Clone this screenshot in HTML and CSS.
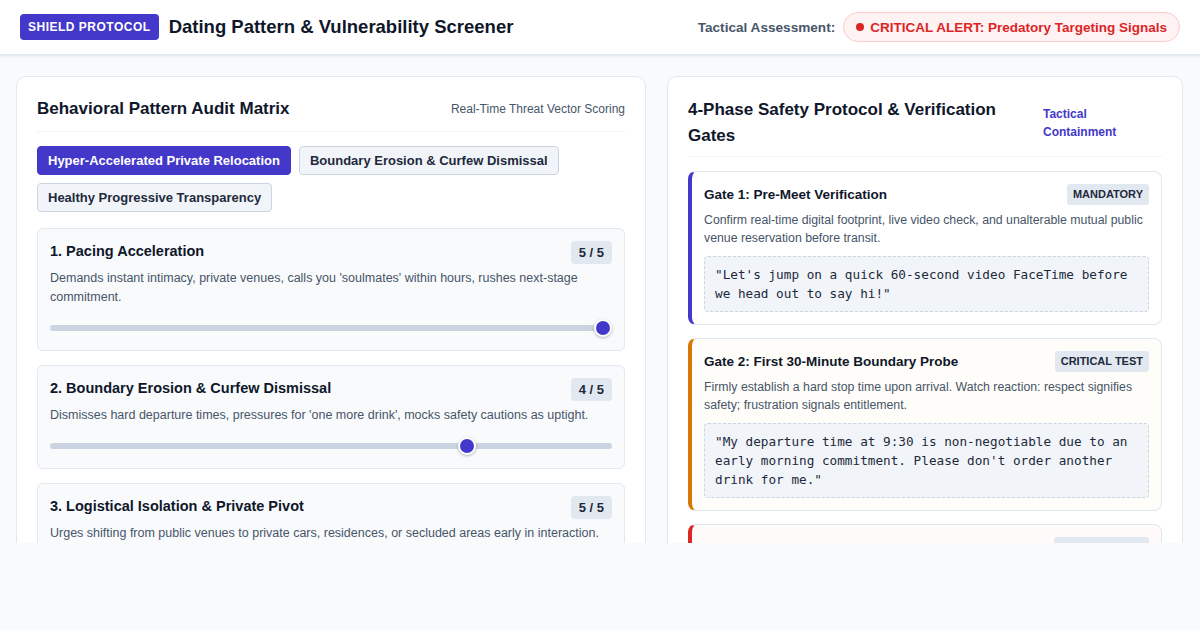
FILE: index.html
```html
<!DOCTYPE html>
<html lang="en">
<head>
<meta charset="utf-8">
<title>Dating Pattern &amp; Vulnerability Screener</title>
<link rel="stylesheet" href="styles.css">
</head>
<body>
<header class="topbar">
  <div class="brand">
    <span class="brand-badge">SHIELD PROTOCOL</span>
    <h1 class="brand-title">Dating Pattern &amp; Vulnerability Screener</h1>
  </div>
  <div class="assessment">
    <span class="assessment-label">Tactical Assessment:</span>
    <span class="alert-pill"><span class="alert-dot"></span>CRITICAL ALERT: Predatory Targeting Signals</span>
  </div>
</header>

<div class="viewport">
  <main class="layout">
    <section class="panel">
      <div class="panel-head">
        <h2 class="panel-title">Behavioral Pattern Audit Matrix</h2>
        <span class="panel-sub">Real-Time Threat Vector Scoring</span>
      </div>
      <div class="tabs">
        <button class="tab tab-active">Hyper-Accelerated Private Relocation</button>
        <button class="tab">Boundary Erosion &amp; Curfew Dismissal</button>
        <button class="tab">Healthy Progressive Transparency</button>
      </div>
      <div class="criteria">
        <div class="criterion">
          <div class="criterion-head">
            <h3 class="criterion-title">1. Pacing Acceleration</h3>
            <span class="score">5 / 5</span>
          </div>
          <p class="criterion-desc">Demands instant intimacy, private venues, calls you 'soulmates' within hours, rushes next-stage commitment.</p>
          <div class="slider"><div class="slider-rail"><div class="slider-fill" style="width:100%"><span class="thumb"></span></div></div></div>
        </div>
        <div class="criterion">
          <div class="criterion-head">
            <h3 class="criterion-title">2. Boundary Erosion &amp; Curfew Dismissal</h3>
            <span class="score">4 / 5</span>
          </div>
          <p class="criterion-desc">Dismisses hard departure times, pressures for 'one more drink', mocks safety cautions as uptight.</p>
          <div class="slider"><div class="slider-rail"><div class="slider-fill" style="width:75%"><span class="thumb"></span></div></div></div>
        </div>
        <div class="criterion">
          <div class="criterion-head">
            <h3 class="criterion-title">3. Logistical Isolation &amp; Private Pivot</h3>
            <span class="score">5 / 5</span>
          </div>
          <p class="criterion-desc">Urges shifting from public venues to private cars, residences, or secluded areas early in interaction.</p>
          <div class="slider"><div class="slider-rail"><div class="slider-fill" style="width:100%"><span class="thumb"></span></div></div></div>
        </div>
      </div>
    </section>

    <section class="panel">
      <div class="panel-head panel-head-tight">
        <h2 class="panel-title panel-title-wrap">4-Phase Safety Protocol &amp; Verification Gates</h2>
        <span class="panel-link">Tactical Containment</span>
      </div>
      <div class="gates">
        <div class="gate gate-indigo">
          <div class="gate-head">
            <h3 class="gate-title">Gate 1: Pre-Meet Verification</h3>
            <span class="gate-tag">MANDATORY</span>
          </div>
          <p class="gate-desc">Confirm real-time digital footprint, live video check, and unalterable mutual public venue reservation before transit.</p>
          <div class="script">"Let's jump on a quick 60-second video FaceTime before we head out to say hi!"</div>
        </div>
        <div class="gate gate-amber">
          <div class="gate-head">
            <h3 class="gate-title">Gate 2: First 30-Minute Boundary Probe</h3>
            <span class="gate-tag">CRITICAL TEST</span>
          </div>
          <p class="gate-desc">Firmly establish a hard stop time upon arrival. Watch reaction: respect signifies safety; frustration signals entitlement.</p>
          <div class="script">"My departure time at 9:30 is non-negotiable due to an early morning commitment. Please don't order another drink for me."</div>
        </div>
        <div class="gate gate-red">
          <div class="gate-head">
            <h3 class="gate-title">Gate 3: Mid-Date Venue Lock (Zero Relocation)</h3>
            <span class="gate-tag">HIGH DEFENSE</span>
          </div>
          <p class="gate-desc">Refuse any proposal to move to a second private location, vehicle, or residence. Keep the meeting in the verified public venue.</p>
          <div class="script">"I'm happy right here. I'll be heading home on my own from this spot tonight."</div>
        </div>
      </div>
    </section>
  </main>
</div>
</body>
</html>
```

FILE: styles.css
```css
* { box-sizing: border-box; }

html, body {
  margin: 0;
  padding: 0;
}

body {
  background: #f8fafc;
  font-family: "Liberation Sans", Arial, sans-serif;
  color: #0f172a;
  height: 630px;
  overflow: hidden;
}

h1, h2, h3, p { margin: 0; }

.topbar {
  height: 54px;
  background: #ffffff;
  display: flex;
  align-items: center;
  justify-content: space-between;
  padding: 0 20px;
  box-shadow: 0 1px 0 #e2e8f0, 0 2px 3px rgba(148, 163, 184, 0.25);
  position: relative;
  z-index: 1;
}

.brand {
  display: flex;
  align-items: center;
  gap: 10px;
}

.brand-badge {
  background: #4338ca;
  color: #ffffff;
  font-size: 12px;
  font-weight: 700;
  letter-spacing: 0.5px;
  height: 26px;
  line-height: 26px;
  padding: 0 8px;
  border-radius: 4px;
}

.brand-title {
  font-size: 18.5px;
  font-weight: 700;
  color: #0f172a;
}

.assessment {
  display: flex;
  align-items: center;
  gap: 8px;
}

.assessment-label {
  font-size: 13.6px;
  font-weight: 700;
  color: #475569;
}

.alert-pill {
  display: flex;
  align-items: center;
  gap: 6px;
  height: 30px;
  padding: 0 12px;
  background: #fef2f2;
  border: 1px solid #fecaca;
  border-radius: 15px;
  color: #dc2626;
  font-size: 13.5px;
  font-weight: 700;
}

.alert-dot {
  width: 8px;
  height: 8px;
  border-radius: 50%;
  background: #dc2626;
}

.viewport {
  height: 489px;
  overflow: hidden;
}

.layout {
  display: grid;
  grid-template-columns: 630px 516px;
  column-gap: 21px;
  padding: 22px 17px 0 16px;
  align-items: start;
}

.panel {
  background: #ffffff;
  border: 1px solid #e2e8f0;
  border-radius: 10px;
  padding: 20px;
}

.panel-head {
  display: flex;
  align-items: center;
  justify-content: space-between;
  gap: 16px;
  padding-bottom: 10px;
  border-bottom: 1px solid #f1f5f9;
  margin-bottom: 14px;
}

.panel-head-tight {
  padding-bottom: 7px;
  margin-bottom: 14px;
}

.panel-title {
  font-size: 17px;
  font-weight: 700;
  color: #0f172a;
  line-height: 24px;
}

.panel-title-wrap {
  line-height: 26px;
  width: 320px;
}

.panel-sub {
  font-size: 12px;
  color: #475569;
}

.panel-link {
  font-size: 12px;
  font-weight: 700;
  color: #4338ca;
  line-height: 18px;
  width: 100px;
  margin-right: 19px;
}

.tabs {
  display: flex;
  flex-wrap: wrap;
  gap: 8px;
  margin-bottom: 16px;
}

.tab {
  font-family: inherit;
  font-size: 13px;
  font-weight: 700;
  height: 29px;
  padding: 0 10px;
  border-radius: 4px;
  border: 1px solid #cbd5e1;
  background: #f1f5f9;
  color: #1e293b;
  cursor: pointer;
}

.tab-active {
  background: #4338ca;
  border-color: #4338ca;
  color: #ffffff;
}

.criteria {
  display: flex;
  flex-direction: column;
  gap: 14px;
}

.criterion {
  background: #f8fafc;
  border: 1px solid #e2e8f0;
  border-radius: 6px;
  padding: 12px 12px 17px 12px;
}

.criterion-head {
  display: flex;
  justify-content: space-between;
  align-items: flex-start;
}

.criterion-title {
  font-size: 14.5px;
  font-weight: 700;
  color: #0f172a;
  line-height: 20px;
}

.score {
  background: #e2e8f0;
  border-radius: 4px;
  font-size: 13px;
  font-weight: 700;
  color: #1e293b;
  height: 23px;
  line-height: 23px;
  padding: 0 8px;
}

.criterion-desc {
  font-size: 12.5px;
  color: #475569;
  line-height: 19px;
  margin-top: 5px;
}

.slider {
  height: 6px;
  background: #cbd5e1;
  border-radius: 3px;
  margin-top: 18px;
  margin-bottom: 2px;
}

.slider-rail {
  margin: 0 9px;
  height: 6px;
}

.slider-fill {
  position: relative;
  height: 6px;
}

.thumb {
  position: absolute;
  right: -9px;
  top: -6px;
  width: 18px;
  height: 18px;
  border-radius: 50%;
  background: #4338ca;
  border: 2px solid #ffffff;
  box-shadow: 0 1px 3px rgba(15, 23, 42, 0.3);
}

.gates {
  display: flex;
  flex-direction: column;
  gap: 13px;
}

.gate {
  border: 1px solid #e2e8f0;
  border-left: 4px solid #4338ca;
  border-radius: 8px;
  background: #ffffff;
  padding: 12px;
}

.gate-amber {
  border-left-color: #d97706;
  background: #fffdf9;
}

.gate-red {
  border-left-color: #dc2626;
  background: #fffafa;
}

.gate-head {
  display: flex;
  justify-content: space-between;
  align-items: center;
}

.gate-title {
  font-size: 13.5px;
  font-weight: 700;
  color: #0f172a;
}

.gate-tag {
  background: #e2e8f0;
  border-radius: 3px;
  font-size: 11px;
  font-weight: 700;
  color: #1e293b;
  height: 21px;
  line-height: 21px;
  padding: 0 6px;
}

.gate-desc {
  font-size: 12.3px;
  color: #475569;
  line-height: 18px;
  margin-top: 6px;
}

.script {
  margin-top: 9px;
  background: #f1f5f9;
  border: 1px dashed #cbd5e1;
  border-radius: 4px;
  padding: 8px 10px;
  font-family: "DejaVu Sans Mono", monospace;
  font-size: 12.7px;
  line-height: 19px;
  color: #1e293b;
}
```
